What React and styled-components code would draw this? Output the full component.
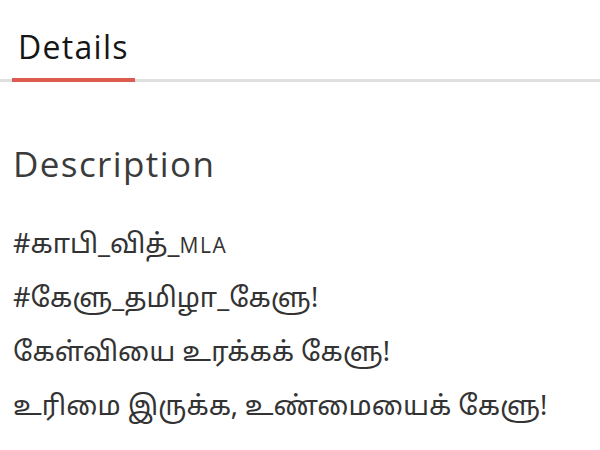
import React from "react";
import styled, { createGlobalStyle } from "styled-components";

const GlobalStyle = createGlobalStyle`
  body {
    margin: 0;
    background: #ffffff;
    font-family: "Open Sans", "Noto Sans", sans-serif;
    color: #333333;
  }
`;

const Page = styled.div`
  width: 600px;
  height: 450px;
  overflow: hidden;
  background: #fff;
`;

const TabBar = styled.div`
  display: flex;
  margin-top: 27px;
  padding-left: 12px;
  border-bottom: 3px solid #dfdfdf;
`;

const Tab = styled.div`
  padding: 0 6px 11px 6px;
  margin-bottom: -3px;
  font-size: 32px;
  line-height: 40px;
  letter-spacing: 1.3px;
  color: #161616;
  border-bottom: 4px solid ${(p) => (p.$active ? "#dc5b51" : "transparent")};
`;

const Content = styled.div`
  padding: 60px 13px 0;
`;

const Heading = styled.h2`
  margin: 0 0 32px;
  font-size: 35px;
  line-height: 44px;
  font-weight: 400;
  letter-spacing: 1.4px;
  color: #3b3b3b;
`;

const Lines = styled.div`
  display: flex;
  flex-direction: column;
`;

const Line = styled.p`
  margin: 0;
  font-family: "Noto Sans Tamil", "Open Sans", sans-serif;
  font-size: 27px;
  line-height: 54px;
  color: #333333;
`;

const Latin = styled.span`
  font-family: "Open Sans", sans-serif;
  font-size: 21px;
  letter-spacing: 1.5px;
`;

export default function App() {
  return (
    <Page>
      <GlobalStyle />
      <TabBar>
        <Tab $active>Details</Tab>
      </TabBar>
      <Content>
        <Heading>Description</Heading>
        <Lines>
          <Line>
            #காபி_வித்_<Latin>MLA</Latin>
          </Line>
          <Line>#கேளு_தமிழா_கேளு!</Line>
          <Line>கேள்வியை உரக்கக் கேளு!</Line>
          <Line>உரிமை இருக்க, உண்மையைக் கேளு!</Line>
        </Lines>
      </Content>
    </Page>
  );
}
